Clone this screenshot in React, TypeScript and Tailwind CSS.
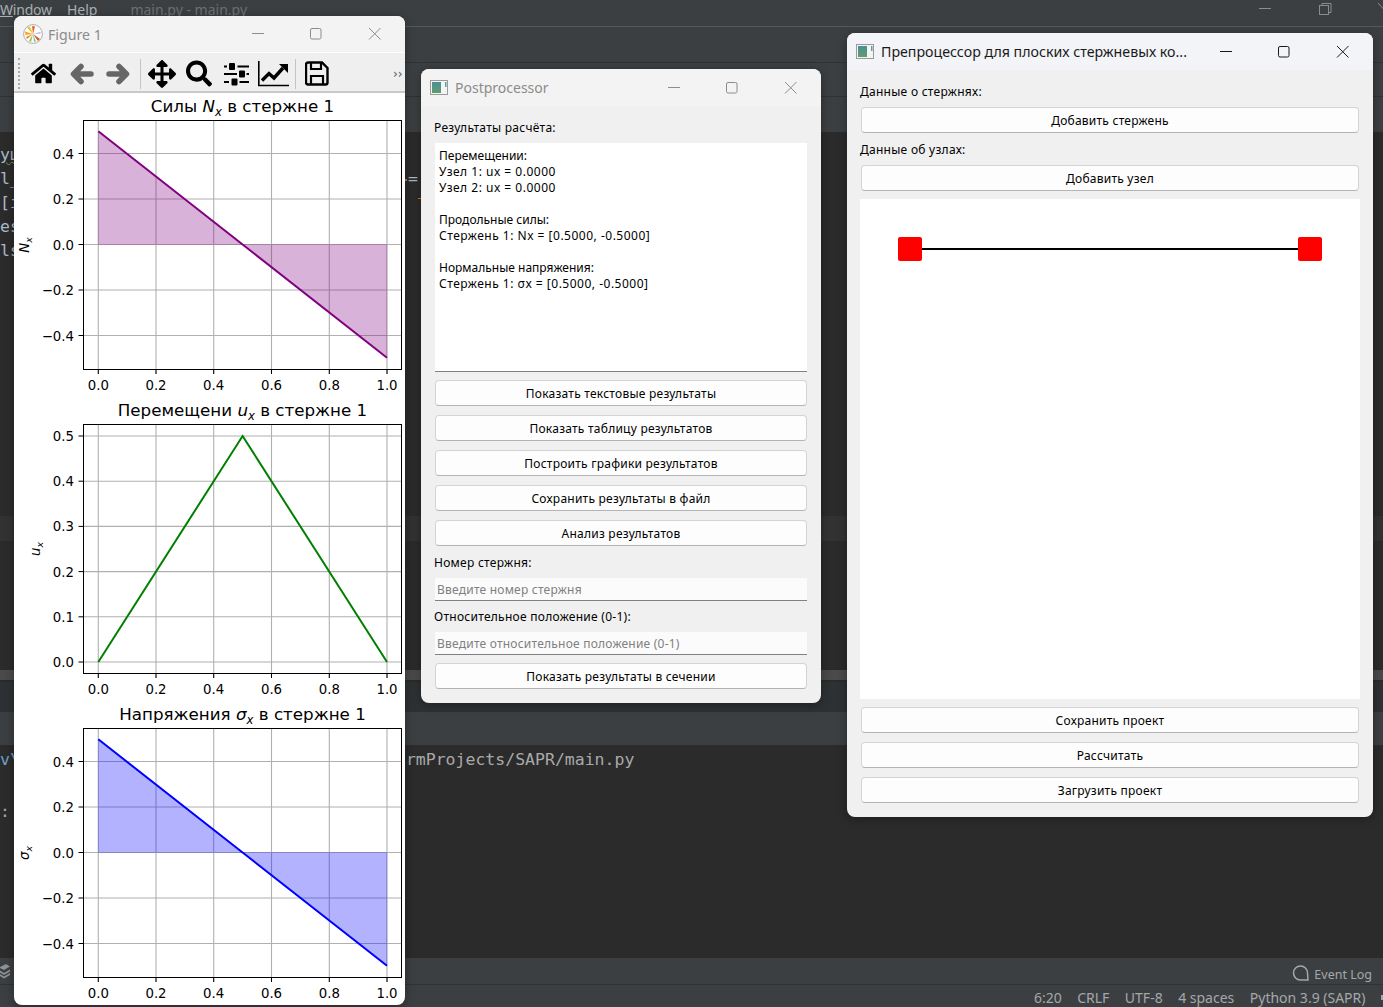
import { FaArrowsAlt, FaHome, FaSearch } from 'react-icons/fa'

const xTicks = [
  { label: '0.0', x: 84.3 },
  { label: '0.2', x: 142 },
  { label: '0.4', x: 199.7 },
  { label: '0.6', x: 257.5 },
  { label: '0.8', x: 315.3 },
  { label: '1.0', x: 373 },
]

const symmetricTicks = [
  { label: '0.4', y: 60.5 },
  { label: '0.2', y: 106 },
  { label: '0.0', y: 151.5 },
  { label: '\u22120.2', y: 197 },
  { label: '\u22120.4', y: 242.5 },
]

const positiveTicks = [
  { label: '0.5', y: 39 },
  { label: '0.4', y: 84.2 },
  { label: '0.3', y: 129.4 },
  { label: '0.2', y: 174.6 },
  { label: '0.1', y: 219.8 },
  { label: '0.0', y: 265 },
]

interface PlotProps {
  prefix: string
  symbol: string
  ylabelX: number
  ylabelY: number
  ticks: { label: string; y: number }[]
  color: string
  line: string
  fill?: string
}

function Plot({ prefix, symbol, ylabelX, ylabelY, ticks, color, line, fill }: PlotProps) {
  return (
    <svg width="391" height="304" className="block shrink-0 font-['DejaVu_Sans',sans-serif]">
      <text x="228.5" y="19" textAnchor="middle" fontSize="16.7" fill="#000">
        {prefix} <tspan fontStyle="italic">{symbol}</tspan>
        <tspan fontStyle="italic" fontSize="11.7" dy="4">x</tspan>
        <tspan dy="-4"> в стержне 1</tspan>
      </text>

      {xTicks.map((t) => (
        <g key={t.label}>
          <line x1={t.x} x2={t.x} y1="27" y2="281" stroke="#b0b0b0" strokeWidth="1.1" />
          <text x={t.x} y="297" textAnchor="middle" fontSize="13.3" fill="#000">{t.label}</text>
        </g>
      ))}
      {ticks.map((t) => (
        <g key={t.label}>
          <line x1="69" x2="387.5" y1={t.y} y2={t.y} stroke="#b0b0b0" strokeWidth="1.1" />
          <line x1="64.5" x2="69" y1={t.y} y2={t.y} stroke="#000" strokeWidth="1" />
          <text x="60" y={t.y + 5} textAnchor="end" fontSize="13.3" fill="#000">{t.label}</text>
        </g>
      ))}
      {xTicks.map((t) => (
        <line key={t.label} x1={t.x} x2={t.x} y1="276" y2="281" stroke="#000" strokeWidth="1" />
      ))}

      {fill && (
        <path
          d={fill}
          fill={color}
          fillOpacity="0.3"
          stroke={color}
          strokeOpacity="0.1"
          strokeWidth="1"
        />
      )}
      <path d={line} fill="none" stroke={color} strokeWidth="2" />

      <rect x="69.5" y="27.5" width="318" height="249" fill="none" stroke="#000" strokeWidth="1" />

      <text
        transform={`translate(${ylabelX} ${ylabelY}) rotate(-90)`}
        textAnchor="middle"
        fontSize="13.3"
        fontStyle="italic"
        fill="#000"
      >
        {symbol}
        <tspan fontSize="9.4" dy="3">x</tspan>
      </text>
    </svg>
  )
}

const QtIcon = () => (
  <svg width="18" height="16" viewBox="0 0 18 16" className="shrink-0">
    <rect x="0.5" y="0.5" width="17" height="14" fill="#f4f4f4" stroke="#9a9a9a" />
    <defs>
      <linearGradient id="qt-icon" x1="0" y1="0" x2="0" y2="1">
        <stop offset="0" stopColor="#4a8f9a" />
        <stop offset="1" stopColor="#5f9d6a" />
      </linearGradient>
    </defs>
    <rect x="2" y="2" width="9" height="11" fill="url(#qt-icon)" />
    <rect x="15" y="2" width="1.5" height="5" fill="#5aa0a8" />
  </svg>
)

const WindowControls = ({ color }: { color: string }) => (
  <svg width="130" height="14" viewBox="0 0 130 14" className="shrink-0" fill="none" stroke={color} strokeWidth="1">
    <path d="M0 6.5h12" />
    <rect x="58.5" y="1.5" width="10.5" height="10.5" rx="1.5" />
    <path d="M117 1l11.5 11.5M128.5 1l-11.5 11.5" />
  </svg>
)

const MplLogo = () => (
  <svg width="20" height="20" viewBox="0 0 20 20" className="shrink-0">
    <circle cx="10" cy="10" r="9.4" fill="#fdfdfd" stroke="#9a9a9a" strokeWidth="0.8" />
    <path d="M10 10L2 7.5L2.5 11z" fill="#f5a623" />
    <path d="M10 10L4 3.5L7 2.5z" fill="#f0c020" />
    <path d="M10 10L9 2L12 2.5z" fill="#e8622a" />
    <path d="M10 10L17 15L15 17z" fill="#d9541e" />
    <path d="M10 10L6 17L8 18z" fill="#8cc63f" />
    <path d="M10 10L11 18L13 17.5z" fill="#7bc8a4" />
    <path d="M10 10L17.5 8L17.5 9.5z" fill="#a8a8d8" />
    <path d="M10 10L3 13L4 15z" fill="#f08030" />
  </svg>
)

const BackIcon = () => (
  <svg width="24" height="24" viewBox="0 0 24 24" fill="none" stroke="#666" strokeWidth="5.5" strokeLinecap="round" strokeLinejoin="round">
    <path d="M11 4.5L3.5 12l7.5 7.5M4 12h17" />
  </svg>
)

const ForwardIcon = () => (
  <svg width="24" height="24" viewBox="0 0 24 24" fill="none" stroke="#666" strokeWidth="5.5" strokeLinecap="round" strokeLinejoin="round">
    <path d="M13 4.5l7.5 7.5-7.5 7.5M20 12H3" />
  </svg>
)

const SlidersIcon = () => (
  <svg width="25" height="24" viewBox="0 0 25 24" fill="#000">
    <rect x="0" y="3.5" width="3" height="2" />
    <rect x="13.5" y="3.5" width="11.5" height="2" />
    <rect x="5" y="1" width="6" height="7" rx="1" />
    <rect x="0" y="11" width="13" height="2" />
    <rect x="22.5" y="11" width="2.5" height="2" />
    <rect x="15" y="8.5" width="6" height="7" rx="1" />
    <rect x="0" y="19" width="5" height="2" />
    <rect x="15.5" y="19" width="9.5" height="2" />
    <rect x="7.5" y="16.5" width="6" height="7" rx="1" />
  </svg>
)

const ChartIcon = () => (
  <svg width="31" height="26" viewBox="0 0 31 26" fill="none" stroke="#000">
    <path d="M0.8 0v24.5H31" strokeWidth="1.6" />
    <path d="M4 19.5l7-7 5 4.5 9-10" strokeWidth="3.4" />
    <path d="M21 3h9v9z" fill="#000" stroke="none" />
  </svg>
)

const SaveIcon = () => (
  <svg width="24" height="25" viewBox="0 0 24 25" fill="none" stroke="#000" strokeWidth="2.4">
    <path d="M3 1.5h14l5.5 5.5v14.5a2 2 0 0 1-2 2H3a2 2 0 0 1-2-2v-18a2 2 0 0 1 2-2z" />
    <path d="M6 1.5v6.5h10V1.5" strokeWidth="2.2" />
    <path d="M6 23.5V15h12v8.5" strokeWidth="2.2" />
  </svg>
)

function Toolbar() {
  return (
    <div className="flex h-[40px] items-center border-b-2 border-[#c8c8c8] bg-[#efefef] pt-[3px]">
      <div className="ml-[4px] h-[31px] w-[3px] border-l-2 border-dotted border-[#a8a8a8]" />
      <div className="ml-[10px] flex w-[25px] justify-center"><FaHome size={25} color="#000" /></div>
      <div className="ml-[14px] flex w-[24px] justify-center"><BackIcon /></div>
      <div className="ml-[12px] flex w-[24px] justify-center"><ForwardIcon /></div>
      <div className="ml-[10px] h-[30px] w-px bg-[#c4c4c4]" />
      <div className="ml-[7px] flex w-[28px] justify-center"><FaArrowsAlt size={30} color="#000" /></div>
      <div className="ml-[10px] flex w-[26px] justify-center"><FaSearch size={27} color="#000" /></div>
      <div className="ml-[12px] flex w-[25px] justify-center"><SlidersIcon /></div>
      <div className="ml-[9px] flex w-[31px] justify-center"><ChartIcon /></div>
      <div className="ml-[6px] h-[30px] w-px bg-[#c4c4c4]" />
      <div className="ml-[9px] flex w-[24px] justify-center"><SaveIcon /></div>
      <span className="ml-[64px] text-[12px] leading-none text-[#555] font-['DejaVu_Sans',sans-serif]">››</span>
    </div>
  )
}

const QtButton = ({ label }: { label: string }) => (
  <div className="flex h-[26px] items-center justify-center rounded-[4px] border border-[#d4d4d4] border-b-[#b4b4b4] bg-[#fdfdfd] pt-px text-[12px] tracking-[0.24px] text-black">
    {label}
  </div>
)

const QtInput = ({ placeholder }: { placeholder: string }) => (
  <div className="flex h-[23px] items-center border-b border-[#808080] bg-[#fbfbfb] pl-[2px] pt-px text-[12px] tracking-[0.22px] text-[#808080]">
    {placeholder}
  </div>
)

const QtLabel = ({ text }: { text: string }) => (
  <div className="-ml-px flex h-[18px] items-center text-[12px] tracking-[0.27px] text-black">{text}</div>
)

const resultLines = [
  { text: 'Перемещении:', numeric: false },
  { text: 'Узел 1: ux = 0.0000', numeric: true },
  { text: 'Узел 2: ux = 0.0000', numeric: true },
  { text: '', numeric: false },
  { text: 'Продольные силы:', numeric: false },
  { text: 'Стержень 1: Nx = [0.5000, -0.5000]', numeric: true },
  { text: '', numeric: false },
  { text: 'Нормальные напряжения:', numeric: false },
  { text: 'Стержень 1: σx = [0.5000, -0.5000]', numeric: true },
]

function Postprocessor() {
  return (
    <div className="absolute left-[421px] top-[69px] flex h-[634px] w-[400px] flex-col overflow-hidden rounded-[8px] bg-[#f0f0f0] font-['Noto_Sans',sans-serif] shadow-[0_2px_10px_rgba(0,0,0,0.35)]">
      <div className="flex h-[37px] shrink-0 items-center bg-[#f3f3f3] pl-[9px] pr-[23px]">
        <QtIcon />
        <span className="ml-[7px] flex-1 text-[14px] text-[#8c8c8c]">Postprocessor</span>
        <WindowControls color="#8c8c8c" />
      </div>
      <div className="flex flex-1 flex-col px-[14px]">
        <div className="mt-[13px]"><QtLabel text="Результаты расчёта:" /></div>
        <div className="mt-[6px] h-[229px] border-b border-[#808080] bg-white pl-[4px] pt-[5px] text-[12px] leading-[16px] text-black">
          {resultLines.map((line, i) => (
            <div key={i} className={line.numeric ? 'h-[16px] whitespace-pre tracking-[0.5px]' : 'h-[16px] whitespace-pre'}>
              {line.text}
            </div>
          ))}
        </div>
        <div className="mt-[8px] flex flex-col gap-[9px]">
          <QtButton label="Показать текстовые результаты" />
          <QtButton label="Показать таблицу результатов" />
          <QtButton label="Построить графики результатов" />
          <QtButton label="Сохранить результаты в файл" />
          <QtButton label="Анализ результатов" />
        </div>
        <div className="mt-[8px]"><QtLabel text="Номер стержня:" /></div>
        <div className="mt-[6px]"><QtInput placeholder="Введите номер стержня" /></div>
        <div className="mt-[7px]"><QtLabel text="Относительное положение (0-1):" /></div>
        <div className="mt-[6px]"><QtInput placeholder="Введите относительное положение (0-1)" /></div>
        <div className="mt-[8px]"><QtButton label="Показать результаты в сечении" /></div>
      </div>
    </div>
  )
}

function Preprocessor() {
  return (
    <div className="absolute left-[847px] top-[33px] flex h-[784px] w-[526px] flex-col overflow-hidden rounded-[8px] bg-[#f0f0f0] font-['Noto_Sans',sans-serif] shadow-[0_2px_10px_rgba(0,0,0,0.35)]">
      <div className="flex h-[37px] shrink-0 items-center bg-[#f2f4f7] pl-[9px] pr-[23px]">
        <QtIcon />
        <span className="ml-[7px] flex-1 text-[14.2px] text-[#1a1a1a]">Препроцессор для плоских стержневых ко...</span>
        <WindowControls color="#1a1a1a" />
      </div>
      <div className="flex flex-1 flex-col px-[14px]">
        <div className="mt-[13px]"><QtLabel text="Данные о стержнях:" /></div>
        <div className="mt-[6px]"><QtButton label="Добавить стержень" /></div>
        <div className="mt-[8px]"><QtLabel text="Данные об узлах:" /></div>
        <div className="mt-[6px]"><QtButton label="Добавить узел" /></div>
        <div className="-mx-px mt-[8px] h-[500px] bg-white pl-[38px] pt-[38px]">
          <div className="flex w-[424px] items-center">
            <div className="h-[24px] w-[24px] rounded-[2px] bg-[#ff0000]" />
            <div className="h-[2px] flex-1 bg-black" />
            <div className="h-[24px] w-[24px] rounded-[2px] bg-[#ff0000]" />
          </div>
        </div>
        <div className="mt-[8px] flex flex-col gap-[9px]">
          <QtButton label="Сохранить проект" />
          <QtButton label="Рассчитать" />
          <QtButton label="Загрузить проект" />
        </div>
      </div>
    </div>
  )
}

function FigureWindow() {
  return (
    <div className="absolute left-[14px] top-[16px] flex h-[989px] w-[391px] flex-col overflow-hidden rounded-[8px] bg-white shadow-[0_2px_10px_rgba(0,0,0,0.35)]">
      <div className="flex h-[37px] shrink-0 items-center border-b border-white bg-[#f3f3f3] pl-[9px] pr-[23px] font-['Noto_Sans',sans-serif]">
        <MplLogo />
        <span className="ml-[5px] flex-1 pt-px text-[14.2px] text-[#8c8c8c]">Figure 1</span>
        <WindowControls color="#8c8c8c" />
      </div>
      <Toolbar />
      <div className="flex flex-col">
        <Plot
          prefix="Силы"
          symbol="N"
          ylabelX={15}
          ylabelY={152}
          ticks={symmetricTicks}
          color="#800080"
          line="M84.3 38.3L373 264.7"
          fill="M84.3 38.3L228.6 151.5L373 264.7L373 151.5L84.3 151.5Z"
        />
        <Plot
          prefix="Перемещени"
          symbol="u"
          ylabelX={26}
          ylabelY={152}
          ticks={positiveTicks}
          color="#008000"
          line="M84.3 265L228.6 39L373 265"
        />
        <Plot
          prefix="Напряжения"
          symbol="σ"
          ylabelX={15}
          ylabelY={152}
          ticks={symmetricTicks}
          color="#0000ff"
          line="M84.3 38.3L228.6 151.5L373 264.7"
          fill="M84.3 38.3L228.6 151.5L373 264.7L373 151.5L84.3 151.5Z"
        />
      </div>
    </div>
  )
}

function IdeBackground() {
  return (
    <div className="flex h-full flex-col font-['Noto_Sans',sans-serif]">
      <div className="flex h-[27px] shrink-0 items-center border-b border-[#55585a] bg-[#3c3f41] pb-[8px] text-[14px] text-[#a9b0b6]">
        <span className="tracking-[-0.2px]"><span className="underline">W</span>indow</span>
        <span className="ml-[15px]">Help</span>
        <span className="ml-[33px] text-[#6c7072]">main.py - main.py</span>
        <svg width="124" height="14" viewBox="0 0 124 14" className="ml-auto" fill="none" stroke="#8a8d8f">
          <path d="M0 6.5h12" />
          <rect x="60.5" y="3.5" width="9" height="9" />
          <path d="M63 3.5v-2h9v9h-2.5" />
          <path d="M119 1l10 11" />
        </svg>
      </div>
      <div className="h-[36px] shrink-0 border-b border-[#323232] bg-[#3c3f41]" />
      <div className="h-[34px] shrink-0 border-b border-[#323232] bg-[#3c3f41]" />
      <div className="h-[35px] shrink-0 bg-[#3c3f41]" />
      <div className="relative h-[384px] shrink-0 bg-[#2b2b2b] pt-[11px] font-['DejaVu_Sans_Mono',monospace] text-[16.5px] leading-[24px] text-[#a9b7c6]">
        <div className="underline decoration-wavy decoration-[#6a9955] decoration-1">уш</div>
        <div>l_</div>
        <div>[i</div>
        <div>es</div>
        <div>ls</div>
        <span className="absolute left-[408px] top-[35px] text-[#a9b7c6]">=</span>
        <span className="absolute left-[405px] top-[47px] h-[2px] w-[2px] bg-[#cc7832]" />
        <span className="absolute left-[418px] top-[66px] h-px w-[3px] bg-[#cc7832]" />
      </div>
      <div className="h-[25px] shrink-0 bg-[#323232]" />
      <div className="h-[129px] shrink-0 bg-[#2b2b2b]" />
      <div className="h-[10px] shrink-0 bg-[#4a4a4a]" />
      <div className="h-[2px] shrink-0 bg-[#2b2b2b]" />
      <div className="h-[30px] shrink-0 bg-[#2e3133]" />
      <div className="h-[33px] shrink-0 bg-[#3c3f41]" />
      <div className="h-[213px] shrink-0 bg-[#2b2b2b] pt-px font-['DejaVu_Sans_Mono',monospace] text-[16.5px] leading-[28px] text-[#a9a9a9]">
        <div className="flex">
          <span className="text-[#6f9fc8]">v\</span>
          <span className="ml-[386px]">rmProjects/SAPR/main.py</span>
        </div>
        <div className="mt-[24px]">:</div>
      </div>
      <div className="flex h-[27px] shrink-0 items-center justify-between border-b border-[#323232] bg-[#3c3f41] pr-[11px] pt-[5px] text-[#a4a8aa]">
        <svg width="10" height="16" viewBox="0 0 10 16" fill="#8f9294" className="-mt-[5px]">
          <path d="M0 4l6-3 4 2.5-6 3.5L0 5zM0 7.5L4 10l6-3.5v2L4 12 0 9.5zM0 11l4 2.5L10 10v2l-6 3.5L0 13z" />
        </svg>
        <span className="flex items-center gap-[5px] text-[12.5px]">
          <svg width="17" height="16" viewBox="0 0 17 16" fill="none" stroke="#a4a8aa" strokeWidth="1.5" className="-mt-px">
            <path d="M16 15H8.5A7 7 0 1 1 15.5 8z" />
          </svg>
          <span className="pt-[3px]">Event Log</span>
        </span>
      </div>
      <div className="flex flex-1 items-center justify-end gap-[15.5px] bg-[#3c3f41] pt-[2px] text-[14px] text-[#a4a8aa]">
        <span>6:20</span>
        <span>CRLF</span>
        <span>UTF-8</span>
        <span>4 spaces</span>
        <span>Python 3.9 (SAPR)</span>
        <span className="h-[5px] w-[2px] bg-[#a4a8aa]" />
      </div>
    </div>
  )
}

export default function App() {
  return (
    <div className="relative h-[1007px] w-[1383px] overflow-hidden bg-[#2b2b2b]">
      <IdeBackground />
      <FigureWindow />
      <Postprocessor />
      <Preprocessor />
    </div>
  )
}
